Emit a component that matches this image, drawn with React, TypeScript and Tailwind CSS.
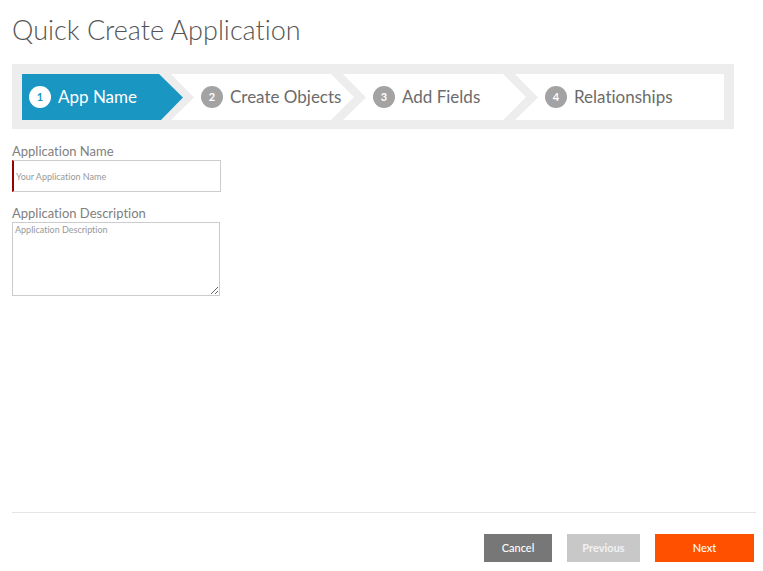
type Step = { number: number; title: string };

const steps: Step[] = [
  { number: 1, title: "App Name" },
  { number: 2, title: "Create Objects" },
  { number: 3, title: "Add Fields" },
  { number: 4, title: "Relationships" },
];

function Chevron({ active }: { active: boolean }) {
  return (
    <svg
      className="absolute inset-y-0 right-0 h-full w-[35px]"
      viewBox="0 0 35 46"
      preserveAspectRatio="none"
      aria-hidden="true"
    >
      <rect width="35" height="46" fill={active ? "#1a96c2" : "#ffffff"} />
      <path d={active ? "M-1 -1L24 23.5L2 46H35V0H0Z" : "M0 0L23 23L0 46H35V0Z"} fill="#ededed" />
      <path d="M12 0L35 23.5L12 46H36V0Z" fill="#ffffff" />
    </svg>
  );
}

function WizardStep({ step, active, last }: { step: Step; active: boolean; last: boolean }) {
  return (
    <li
      aria-current={active ? "step" : undefined}
      className={`relative flex h-[46px] items-center gap-[7px] pl-[7px] whitespace-nowrap ${
        active ? "bg-[#1a96c2] text-white" : "bg-white text-[#6b6b6b]"
      } ${last ? "flex-1" : "w-43"}`}
    >
      {!last && <Chevron active={active} />}
      <span
        className={`flex size-[22px] shrink-0 items-center justify-center rounded-full text-[11px] font-bold ${
          active ? "bg-white text-[#1a96c2]" : "bg-[#a3a3a3] text-white"
        }`}
      >
        {step.number}
      </span>
      <span className="relative text-[17px] leading-6">{step.title}</span>
    </li>
  );
}

export default function App() {
  return (
    <main className="flex min-h-screen flex-col bg-white pt-3 pr-[7px] pb-[9px] pl-3 font-[Lato,sans-serif] text-[#808080] [font-variant-ligatures:none]">
      <h1 className="text-[27px] leading-9 font-light text-[#555555]">Quick Create Application</h1>
      <ol className="mt-4 mr-[22px] flex border-[10px] border-b-[9px] border-[#ededed]">
        {steps.map((step, index) => (
          <WizardStep
            key={step.number}
            step={step}
            active={index === 0}
            last={index === steps.length - 1}
          />
        ))}
      </ol>
      <form id="create-app" className="mt-[13px] flex flex-col items-start text-[13px] leading-[18px]">
        <label htmlFor="app-name">Application Name</label>
        <input
          id="app-name"
          type="text"
          placeholder="Your Application Name"
          className="h-8 w-[209px] border border-l-2 border-[#cccccc] border-l-[#990000] px-0.5 text-[9px] outline-none placeholder:text-[#999999]"
        />
        <label htmlFor="app-description" className="mt-3">
          Application Description
        </label>
        <textarea
          id="app-description"
          placeholder="Application Description"
          className="h-[74px] w-[208px] resize border border-[#cccccc] px-0.5 py-px text-[9px] leading-3 outline-none placeholder:text-[#999999]"
        />
      </form>
      <footer className="mt-auto flex justify-end gap-[15px] border-t border-[#e5e5e5] pt-[21px] text-[11px] leading-4 font-medium text-white">
        <button type="button" className="h-7 w-[68px] bg-[#777777]">
          Cancel
        </button>
        <button type="button" disabled className="h-7 w-[73px] bg-[#c8c8c8] font-bold text-[#f2f2f2]">
          Previous
        </button>
        <button type="submit" form="create-app" className="mr-0.5 h-7 w-[99px] bg-[#ff5000]">
          Next
        </button>
      </footer>
    </main>
  );
}
